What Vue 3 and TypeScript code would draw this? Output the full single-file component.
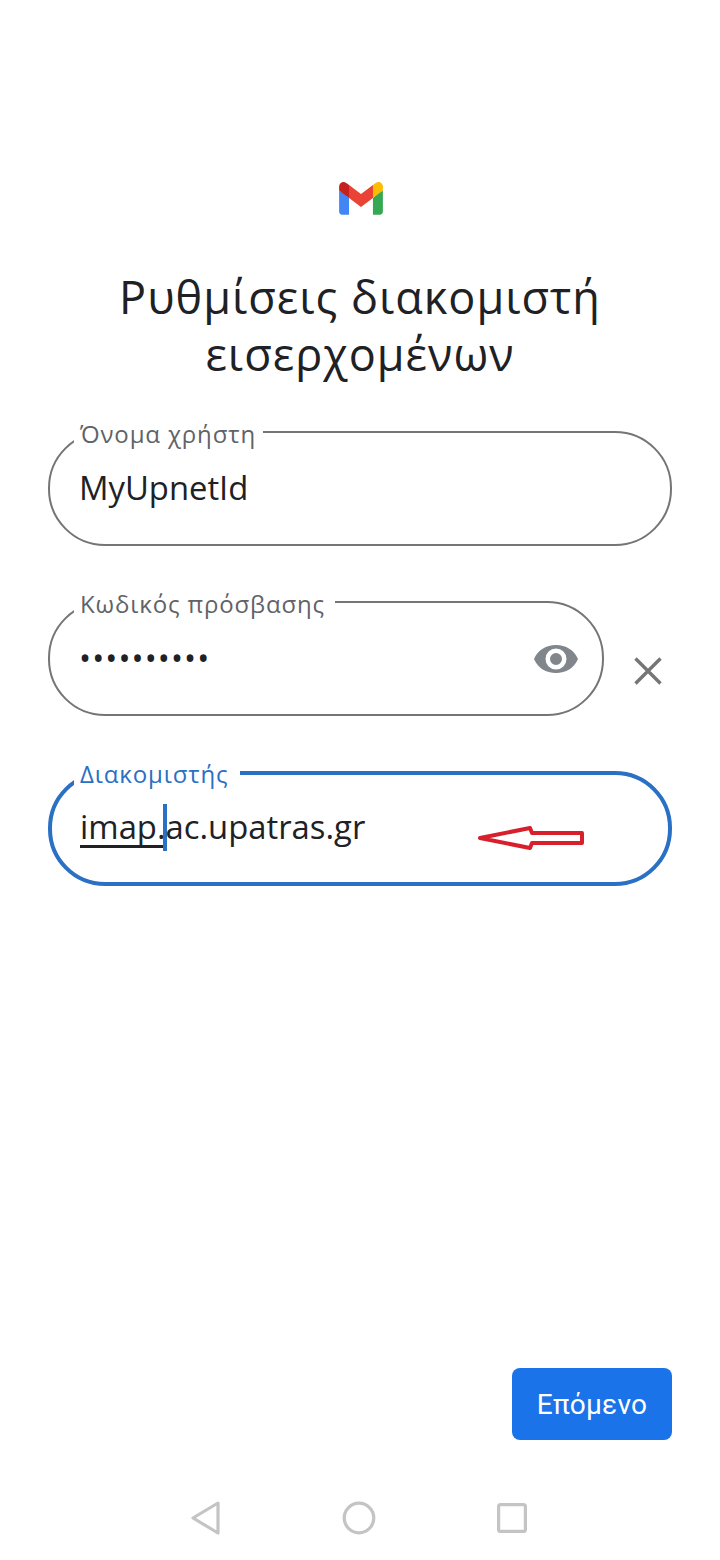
<script setup lang="ts">
const dots = '••••••••••'
</script>

<template>
  <main class="page">
    <svg class="logo" viewBox="0 0 256 193" width="44" height="33" aria-hidden="true">
      <path fill="#4285f4" d="M58.180 192.050V93.140L27.500 65.070 0 49.500v125.100c0 9.660 7.830 17.450 17.450 17.450h40.730" />
      <path fill="#34a853" d="M197.820 192.050h40.730c9.650 0 17.450-7.820 17.450-17.450V49.500l-27.500 15.570-30.680 28.070v98.910" />
      <path fill="#ea4335" d="M58.180 93.140l-4.110-38.650 4.110-36.990L128 69.870l69.820-52.370 4.670 35-4.670 40.640L128 145.500z" />
      <path fill="#fbbc04" d="M197.820 17.500v75.640L256 49.500V26.230c0-21.580-24.640-33.880-41.890-20.940l-16.290 12.210" />
      <path fill="#c5221f" d="M0 49.500l26.760 20.070L58.180 93.140V17.500L41.890 5.290C24.610-7.650 0 4.650 0 26.230V49.500" />
    </svg>

    <h1 class="title">Ρυθμίσεις διακομιστή<br />εισερχομένων</h1>

    <section class="fields">
      <div class="field">
        <span class="label">Όνομα χρήστη</span>
        <span class="value">MyUpnetId</span>
      </div>

      <div class="password-row">
        <div class="field password">
          <span class="label">Κωδικός πρόσβασης</span>
          <span class="value dots">{{ dots }}</span>
          <svg class="eye" viewBox="0 0 44 30" width="44" height="30" aria-hidden="true">
            <path fill="#80868b" fill-rule="evenodd" d="M0 15C4 6 12 1 22 1s18 5 22 14c-4 9-12 14-22 14S4 24 0 15zm22 10.500a10.500 10.500 0 1 0 0-21 10.500 10.500 0 0 0 0 21zm0-4.500a6 6 0 1 1 0-12 6 6 0 0 1 0 12z" />
          </svg>
        </div>
        <svg class="close" viewBox="0 0 30 30" width="30" height="30" aria-hidden="true">
          <path d="M2.500 2.500l25 25m0-25l-25 25" stroke="#757575" stroke-width="3.400" fill="none" />
        </svg>
      </div>

      <div class="field active">
        <span class="label">Διακομιστής</span>
        <span class="value"><span class="composing">imap.</span><span class="caret"></span>ac.upatras.gr</span>
        <svg class="arrow" viewBox="0 0 108 26" width="108" height="26" aria-hidden="true">
          <path d="M2 13L52 3l2 5h50v10H54l-2 5z" fill="#fff" stroke="#d8202c" stroke-width="4" stroke-linejoin="round" />
        </svg>
      </div>
    </section>

    <button class="next" type="button">Επόμενο</button>

    <nav class="nav" aria-label="Πλοήγηση">
      <svg viewBox="0 0 32 36" width="32" height="36" aria-hidden="true">
        <path d="M28 3L3 18l25 15z" fill="none" stroke="#c4c4c4" stroke-width="3.200" stroke-linejoin="round" />
      </svg>
      <svg viewBox="0 0 34 34" width="34" height="34" aria-hidden="true">
        <circle cx="17" cy="17" r="14.800" fill="none" stroke="#c4c4c4" stroke-width="3.200" />
      </svg>
      <svg viewBox="0 0 32 32" width="32" height="32" aria-hidden="true">
        <rect x="2.600" y="2.600" width="26.800" height="26.800" rx="2" fill="none" stroke="#c4c4c4" stroke-width="3.200" />
      </svg>
    </nav>
  </main>
</template>

<style>
html,
body {
  margin: 0;
  background: #fff;
}
</style>

<style scoped>
.page {
  box-sizing: border-box;
  width: 720px;
  height: 1560px;
  padding: 182px 48px 24px;
  display: flex;
  flex-direction: column;
  align-items: center;
  background: #fff;
  font-family: "Open Sans", "Noto Sans", sans-serif;
  color: #202124;
}
.logo {
  flex: none;
  margin-left: 1px;
}
.title {
  margin: 53px 0 0;
  font-size: 45px;
  line-height: 57px;
  font-weight: 400;
  text-align: center;
  letter-spacing: 1px;
  white-space: nowrap;
}
.fields {
  align-self: stretch;
  margin-top: 49px;
  display: flex;
  flex-direction: column;
  gap: 55px;
}
.field {
  position: relative;
  box-sizing: border-box;
  height: 115px;
  flex: none;
  display: flex;
  align-items: center;
  padding: 0 30px 0 29px;
  border: 2px solid #757575;
  border-radius: 57px;
}
.label {
  position: absolute;
  left: 24px;
  top: -11px;
  padding: 0 7px 0 6px;
  background: #fff;
  font-size: 24px;
  line-height: 24px;
  color: #5f6368;
  letter-spacing: 0.85px;
}
.password .label {
  padding-right: 10px;
}
.value {
  position: relative;
  top: -1px;
  font-size: 32.800px;
  line-height: 40px;
  white-space: nowrap;
}
.dots {
  font-size: 32px;
  letter-spacing: 1.100px;
}
.password-row {
  display: flex;
  align-items: flex-start;
  gap: 29px;
}
.password {
  flex: 1;
}
.eye {
  margin-left: auto;
  margin-right: -6px;
}
.close {
  flex: none;
  margin-top: 55px;
  margin-right: 9px;
}
.active {
  border: 4px solid #2a70c4;
}
.active .label {
  left: 22px;
  top: -13px;
  padding-right: 12px;
  color: #2a70c4;
}
.active .value {
  left: -1px;
}
.composing {
  text-decoration: underline;
  text-decoration-thickness: 2.500px;
  text-underline-offset: 6px;
  text-decoration-skip-ink: none;
}
.caret {
  display: inline-block;
  width: 4px;
  height: 47px;
  margin: 0 -1px 0 -3px;
  vertical-align: -12px;
  background: #2a70c4;
}
.arrow {
  margin-left: auto;
  margin-top: 18px;
  margin-right: 52px;
}
.next {
  align-self: flex-end;
  margin-top: auto;
  width: 160px;
  height: 72px;
  border: 0;
  border-radius: 8px;
  background: #1a73e8;
  color: #fff;
  font-family: Roboto, "Noto Sans", sans-serif;
  font-size: 28px;
  letter-spacing: 0.2px;
}
.nav {
  align-self: stretch;
  margin-top: 60px;
  padding: 0 144px 0 142px;
  display: flex;
  align-items: center;
  justify-content: space-between;
}
</style>
